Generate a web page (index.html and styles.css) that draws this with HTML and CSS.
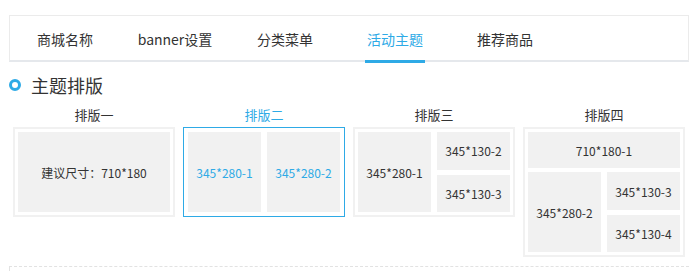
FILE: index.html
```html
<!DOCTYPE html>
<html lang="zh-CN">
<head>
  <meta charset="UTF-8">
  <meta name="viewport" content="width=device-width, initial-scale=1.0">
  <title>活动主题</title>
  <link rel="stylesheet" href="styles.css">
</head>
<body>
  <div class="page">
    <div class="tabs">
      <div class="tab">商城名称</div>
      <div class="tab">banner设置</div>
      <div class="tab">分类菜单</div>
      <div class="tab active"><span>活动主题</span></div>
      <div class="tab">推荐商品</div>
    </div>

    <div class="section-title">
      <i class="dot"></i>
      <span>主题排版</span>
    </div>

    <div class="layouts">
      <div class="layout">
        <div class="layout-name">排版一</div>
        <div class="card">
          <div class="grid one">
            <div class="cell">建议尺寸：710*180</div>
          </div>
        </div>
      </div>

      <div class="layout selected">
        <div class="layout-name">排版二</div>
        <div class="card">
          <div class="grid two">
            <div class="cell">345*280-1</div>
            <div class="cell">345*280-2</div>
          </div>
        </div>
      </div>

      <div class="layout">
        <div class="layout-name">排版三</div>
        <div class="card">
          <div class="grid three">
            <div class="cell tall">345*280-1</div>
            <div class="cell">345*130-2</div>
            <div class="cell">345*130-3</div>
          </div>
        </div>
      </div>

      <div class="layout">
        <div class="layout-name">排版四</div>
        <div class="card">
          <div class="grid four">
            <div class="cell wide">710*180-1</div>
            <div class="cell tall">345*280-2</div>
            <div class="cell">345*130-3</div>
            <div class="cell">345*130-4</div>
          </div>
        </div>
      </div>
    </div>

    <div class="next-block"></div>
  </div>
</body>
</html>
```

FILE: styles.css
```css
body {
  margin: 0;
  padding: 0;
  font-family: "Microsoft YaHei", "Noto Sans CJK SC", sans-serif;
  color: #333;
  background-color: #fff;
  overflow: hidden;
}

.page {
  padding: 15px 1px 0 9px;
}

.tabs {
  display: flex;
  height: 44px;
  border: 1px solid #ebebeb;
  border-bottom: 2px solid #e5e8ec;
}

.tab {
  width: 110px;
  text-align: center;
  font-size: 14px;
  line-height: 46px;
}

.tab.active {
  color: #2eaae6;
}

.tab.active span {
  position: relative;
  display: inline-block;
  padding: 0 2px;
}

.tab.active span::after {
  content: "";
  position: absolute;
  left: 0;
  right: 0;
  bottom: -1px;
  height: 3px;
  background-color: #2eaae6;
}

.section-title {
  display: flex;
  align-items: center;
  gap: 10px;
  height: 24px;
  margin-top: 11px;
  font-size: 18px;
}

.dot {
  width: 6px;
  height: 6px;
  border: 3px solid #2eaae6;
  border-radius: 50%;
}

.layouts {
  display: grid;
  grid-template-columns: repeat(4, 162px);
  gap: 8px;
  align-items: start;
  margin: 9px 0 0 4px;
}

.layout-name {
  text-align: center;
  font-size: 13px;
  line-height: 18px;
  margin-bottom: 3px;
}

.card {
  border: 2px solid #f1f1f1;
  padding: 3px;
}

.selected .layout-name {
  color: #2eaae6;
}

.selected .card {
  border: 1px solid #2eaae6;
  padding: 4px;
}

.grid {
  display: grid;
  gap: 5px 6px;
  height: 80px;
}

.grid.one {
  grid-template-columns: 1fr;
}

.grid.two {
  grid-template-columns: 1fr 1fr;
}

.grid.three {
  grid-template-columns: 1fr 1fr;
  grid-template-rows: 1fr 1fr;
}

.grid.four {
  grid-template-columns: 1fr 1fr;
  grid-template-rows: 36px 1fr 1fr;
  row-gap: 4px;
  height: 120px;
}

.grid.four .cell:nth-child(4) {
  margin-top: 1px;
}

.cell {
  display: flex;
  align-items: center;
  justify-content: center;
  background-color: #f1f1f1;
  font-size: 12px;
}

.selected .cell {
  color: #2eaae6;
}

.cell.tall {
  grid-row: span 2;
}

.cell.wide {
  grid-column: span 2;
}

.next-block {
  height: 4px;
  margin-top: 9px;
  border-top: 1px dashed #e2e2e2;
  border-left: 1px dashed #e2e2e2;
}
```
